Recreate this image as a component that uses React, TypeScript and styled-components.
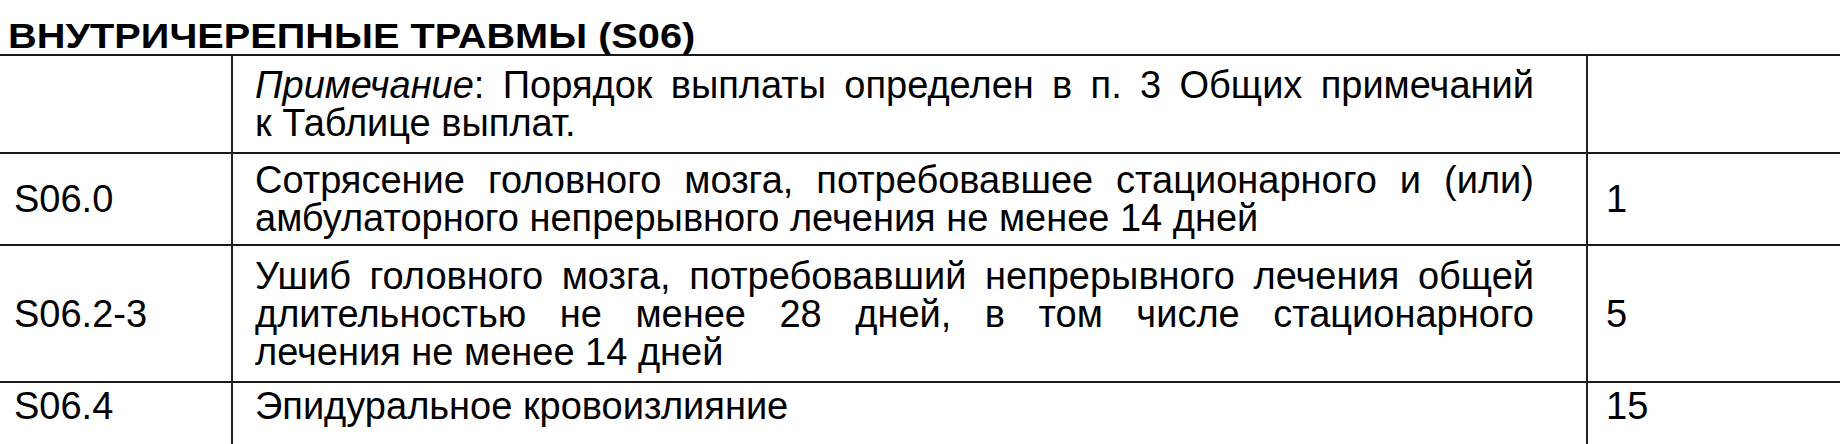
import React from "react";
import styled, { createGlobalStyle } from "styled-components";

const GlobalStyle = createGlobalStyle`
  html, body {
    margin: 0;
    background: #fff;
  }
  body {
    font-family: "Liberation Sans", Arial, sans-serif;
    color: #000;
    overflow: hidden;
  }
`;

const Page = styled.div`
  width: 1840px;
  height: 444px;
  overflow: hidden;
`;

const Heading = styled.h2`
  margin: 0;
  height: 54px;
  box-sizing: border-box;
  padding: 18px 0 0 8px;
  font-size: 35px;
  line-height: 35px;
  font-weight: bold;
  white-space: nowrap;
`;

const HeadingText = styled.span`
  display: inline-block;
  transform: scaleX(1.135);
  transform-origin: left center;
`;

const Table = styled.table`
  width: 1840px;
  border-collapse: collapse;
  table-layout: fixed;
  border-top: 2px solid #111;
  font-size: 38px;
  line-height: 38px;
`;

const Row = styled.tr<{ $height: number }>`
  height: ${(p) => p.$height}px;
  border-top: 2px solid #1a1a1a;
`;

const Cell = styled.td<{ $top?: boolean }>`
  padding: ${(p) => (p.$top ? "4px" : "0")} 0 0 0;
  vertical-align: ${(p) => (p.$top ? "top" : "middle")};
  border-left: 2px solid #222;
  &:first-child {
    border-left: none;
  }
`;

const CodeCell = styled(Cell)`
  padding-left: 14px;
`;

const TextCell = styled(Cell)`
  padding-left: 22px;
  padding-right: 52px;
`;

const RateCell = styled(Cell)`
  padding-left: 18px;
`;

const Line = styled.div<{ $justify?: boolean }>`
  text-align: ${(p) => (p.$justify ? "justify" : "left")};
  text-align-last: ${(p) => (p.$justify ? "justify" : "left")};
`;

interface IRow {
  code: string;
  lines: React.ReactNode[];
  rate: string;
  height: number;
  top?: boolean;
}

const rows: IRow[] = [
  {
    code: "",
    lines: [
      <>
        <i>Примечание</i>: Порядок выплаты определен в п. 3 Общих примечаний
      </>,
      "к Таблице выплат.",
    ],
    rate: "",
    height: 98,
  },
  {
    code: "S06.0",
    lines: [
      "Сотрясение головного мозга, потребовавшее стационарного и (или)",
      "амбулаторного непрерывного лечения не менее 14 дней",
    ],
    rate: "1",
    height: 92,
  },
  {
    code: "S06.2-3",
    lines: [
      "Ушиб головного мозга, потребовавший непрерывного лечения общей",
      "длительностью не менее 28 дней, в том числе стационарного",
      "лечения не менее 14 дней",
    ],
    rate: "5",
    height: 137,
  },
  {
    code: "S06.4",
    lines: ["Эпидуральное кровоизлияние"],
    rate: "15",
    height: 90,
    top: true,
  },
];

function App() {
  return (
    <Page>
      <GlobalStyle />
      <Heading>
        <HeadingText>ВНУТРИЧЕРЕПНЫЕ ТРАВМЫ (S06)</HeadingText>
      </Heading>
      <Table>
        <colgroup>
          <col style={{ width: 232 }} />
          <col style={{ width: 1355 }} />
          <col />
        </colgroup>
        <tbody>
          {rows.map((row, i) => (
            <Row key={i} $height={row.height}>
              <CodeCell $top={row.top}>{row.code}</CodeCell>
              <TextCell $top={row.top}>
                {row.lines.map((line, j) => (
                  <Line key={j} $justify={j < row.lines.length - 1}>
                    {line}
                  </Line>
                ))}
              </TextCell>
              <RateCell $top={row.top}>{row.rate}</RateCell>
            </Row>
          ))}
        </tbody>
      </Table>
    </Page>
  );
}

export default App;
